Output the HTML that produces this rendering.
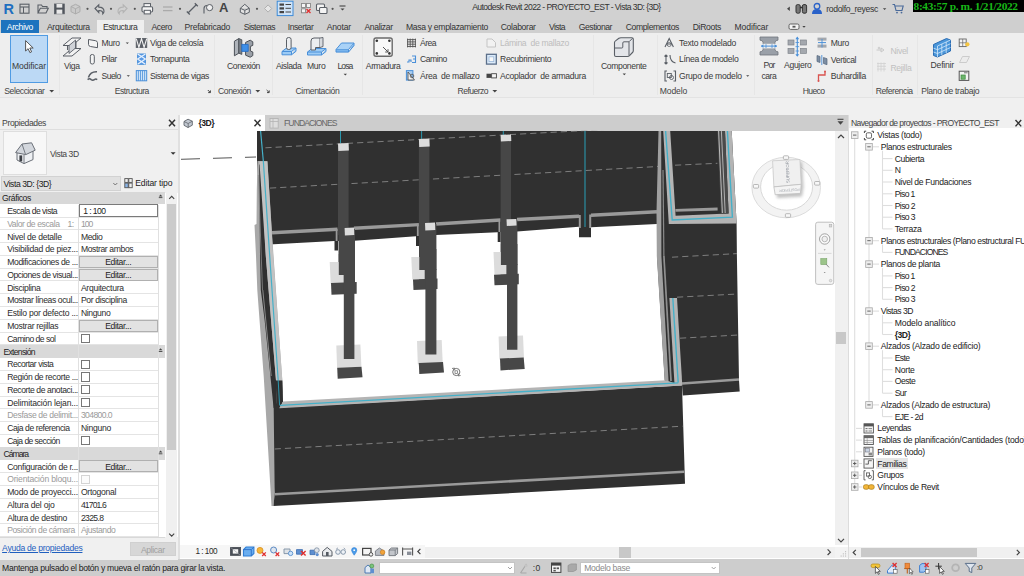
<!DOCTYPE html>
<html lang="es"><head><meta charset="utf-8"><title>Autodesk Revit 2022 - PROYECTO_EST - Vista 3D: {3D}</title>
<style>
html,body{margin:0;padding:0;}
body{width:1024px;height:576px;overflow:hidden;position:relative;background:#f3f3f3;font-family:"Liberation Sans", sans-serif;}
div{position:absolute;box-sizing:border-box;}
.t{white-space:pre;letter-spacing:-0.1px;}
svg{position:absolute;left:0;top:0;}
</style></head><body>
<div style="left:0px;top:0px;width:1024px;height:19.5px;background:#d1d1d1;"></div>
<div style="left:0px;top:19.5px;width:1024px;height:13.5px;background:#cfcfcf;"></div>
<div style="left:0px;top:33px;width:1024px;height:64px;background:#eeeeee;"></div>
<div style="left:0px;top:96.8px;width:1024px;height:1.1px;background:#e3e3e3;"></div>
<div style="left:0px;top:97.5px;width:1024px;height:17.2px;background:#f0f0f0;"></div>
<div style="left:0px;top:114.6px;width:1024px;height:0.8px;background:#e4e4e4;"></div>
<div style="left:0px;top:115.3px;width:178px;height:444.7px;background:#ffffff;"></div>
<div style="left:0px;top:115.3px;width:178px;height:14.4px;background:#f0f0f0;"></div>
<div style="left:180px;top:115.3px;width:668px;height:444.7px;background:#ffffff;"></div>
<div style="left:180px;top:115.3px;width:668px;height:15.4px;background:#cdcdcd;"></div>
<div style="left:180px;top:115.3px;width:85px;height:15.4px;background:#ffffff;"></div>
<div style="left:849px;top:115.3px;width:175px;height:444.7px;background:#ffffff;"></div>
<div style="left:849px;top:115.3px;width:175px;height:12.7px;background:#f0f0f0;"></div>
<div style="left:178px;top:115.3px;width:2px;height:444.7px;background:#e0e0e0;"></div>
<div style="left:847.5px;top:115.3px;width:1.5px;height:444.7px;background:#dcdcdc;"></div>
<div style="left:0px;top:558.8px;width:1024px;height:17.2px;background:#cdcdcd;"></div>
<svg width="1024" height="576" viewBox="0 0 1024 576"><defs><clipPath id="vp"><rect x="180" y="130.7" width="655" height="414"/></clipPath></defs><g clip-path="url(#vp)">
<polygon points="257.0,131.0 660.0,131.0 657.0,224.0 591.0,227.2 591.0,237.3 579.0,237.3 579.0,226.8 517.0,231.5 500.6,232.0 500.6,242.0 497.7,242.0 497.7,232.3 436.0,235.0 419.0,236.0 419.0,246.0 416.0,246.0 416.0,236.2 354.4,240.8 338.0,241.0 338.0,250.5 334.5,250.5 334.5,241.0 273.6,244.3 262.0,244.5 257.0,160.0" fill="#303030" />
<line x1="272.0" y1="232.8" x2="337.5" y2="229.3" stroke="#9a9a9a" stroke-width="3.4" />
<line x1="354.0" y1="228.3" x2="419.0" y2="224.6" stroke="#9a9a9a" stroke-width="3.4" />
<line x1="436.0" y1="224.0" x2="500.6" y2="220.0" stroke="#9a9a9a" stroke-width="3.4" />
<line x1="517.0" y1="219.5" x2="579.0" y2="216.2" stroke="#9a9a9a" stroke-width="3.4" />
<line x1="579.8" y1="215.0" x2="579.8" y2="228.0" stroke="#9a9a9a" stroke-width="2" />
<line x1="590.2" y1="214.6" x2="590.2" y2="228.0" stroke="#9a9a9a" stroke-width="2" />
<line x1="591.0" y1="215.3" x2="657.0" y2="211.8" stroke="#9a9a9a" stroke-width="3.4" />
<line x1="336.6" y1="229.0" x2="336.6" y2="241.0" stroke="#9a9a9a" stroke-width="1.8" />
<line x1="417.8" y1="224.6" x2="417.8" y2="236.0" stroke="#9a9a9a" stroke-width="1.8" />
<line x1="499.4" y1="220.2" x2="499.4" y2="232.0" stroke="#9a9a9a" stroke-width="1.8" />
<line x1="265.4" y1="147.8" x2="660.0" y2="126.5" stroke="#7e7e7e" stroke-width="1" stroke-dasharray="6.2 4"/>
<line x1="270.0" y1="188.1" x2="658.0" y2="166.5" stroke="#7e7e7e" stroke-width="1" stroke-dasharray="6.2 4"/>
<line x1="340.5" y1="131.0" x2="340.5" y2="144.0" stroke="#2b97ad" stroke-width="1" />
<line x1="421.6" y1="131.0" x2="421.6" y2="139.0" stroke="#2b97ad" stroke-width="1" />
<line x1="503.3" y1="131.0" x2="503.3" y2="135.0" stroke="#2b97ad" stroke-width="1" />
<line x1="585.0" y1="131.0" x2="585.0" y2="227.0" stroke="#2b97ad" stroke-width="1.1" />
<polygon points="257.5,161.0 267.4,161.0 273.5,256.0 283.0,391.0 283.0,401.6 279.4,407.6 274.7,493.0 273.5,506.0 271.5,506.0 263.7,376.0 257.3,290.0 256.0,256.0 254.5,225.0 256.5,224.0 256.8,190.0" fill="#a8a8a8" />
<polygon points="259.2,165.0 261.0,163.0 265.8,256.0 276.0,380.5 277.0,407.4 273.6,408.0 270.4,376.0 264.6,320.0 260.8,290.0 260.0,256.0" fill="#303030" />
<polygon points="259.4,161.5 267.4,161.5 273.2,256.0 282.4,380.5 276.0,380.5 265.8,256.0" fill="#c2c2c2" />
<line x1="258.3" y1="175.0" x2="262.5" y2="290.0" stroke="#8c8c8c" stroke-width="0.8" />
<line x1="262.8" y1="290.0" x2="271.2" y2="376.0" stroke="#8a8a8a" stroke-width="1" />
<polygon points="275.6,380.5 282.4,380.5 283.0,401.6 280.0,407.4 277.0,407.4" fill="#303030" />
<polyline points="260.6,131 263.4,162 269.7,256 278.2,380.5" fill="none" stroke="#45b0c8" stroke-width="1.2"/>
<polyline points="278.2,380.5 279.6,405.5" fill="none" stroke="#2b97ad" stroke-width="1"/>
<polygon points="660.0,131.0 731.7,131.0 736.6,223.0 736.9,256.0 739.0,380.0 739.7,391.6 682.8,395.4 682.0,385.0 665.0,384.0 657.0,256.0 657.0,224.0" fill="#303030" />
<polygon points="658.5,131.0 661.2,131.0 661.4,256.0 668.6,381.5 664.6,380.3 656.8,256.0 656.5,212.0" fill="#a0a0a0" />
<line x1="663.0" y1="170.0" x2="663.9" y2="256.0" stroke="#8a8a8a" stroke-width="1.2" />
<line x1="663.9" y1="256.0" x2="671.0" y2="381.0" stroke="#909090" stroke-width="1.7" />
<polygon points="663.2,131.0 670.2,131.0 675.6,215.8 728.6,213.4 725.0,131.0 731.7,131.0 736.6,223.4 668.8,224.0" fill="#b4b4b4" />
<polygon points="717.4,131.0 725.0,131.0 728.6,213.4 721.0,213.8" fill="#4a4a4a" />
<line x1="718.6" y1="131.0" x2="722.4" y2="213.0" stroke="#c8c8c8" stroke-width="0.9" />
<line x1="721.4" y1="131.0" x2="725.2" y2="213.0" stroke="#bdbdbd" stroke-width="0.9" />
<polyline points="665.6,131 672.2,220 732.4,217.2 727.4,131" fill="none" stroke="#45b0c8" stroke-width="1.4"/>
<line x1="675.4" y1="210.4" x2="717.6" y2="209.0" stroke="#9a9a9a" stroke-width="2.8" />
<line x1="675.0" y1="165.2" x2="717.4" y2="163.3" stroke="#7e7e7e" stroke-width="1" stroke-dasharray="6.2 4"/>
<line x1="672.0" y1="257.2" x2="737.0" y2="253.6" stroke="#7e7e7e" stroke-width="1" stroke-dasharray="6.2 4"/>
<line x1="677.0" y1="297.2" x2="737.5" y2="294.0" stroke="#7e7e7e" stroke-width="1" stroke-dasharray="6.2 4"/>
<line x1="680.0" y1="338.2" x2="738.5" y2="335.0" stroke="#7e7e7e" stroke-width="1" stroke-dasharray="6.2 4"/>
<polygon points="669.4,298.0 677.0,298.0 682.3,385.5 674.6,386.0" fill="#b4b4b4" />
<polyline points="672.8,298 678.2,382.5" fill="none" stroke="#45b0c8" stroke-width="1.4"/>
<line x1="682.0" y1="383.5" x2="739.0" y2="379.5" stroke="#9a9a9a" stroke-width="2.6" />
<polygon points="273.6,400.0 279.4,407.6 682.0,385.4 685.0,483.7 273.5,506.0 274.7,493.0" fill="#303030" />
<polygon points="283.0,401.4 665.7,380.3 682.3,385.6 279.4,408.2" fill="#b4b4b4" />
<polyline points="280,405.3 678.2,382.9" fill="none" stroke="#45b0c8" stroke-width="1.3"/>
<line x1="274.7" y1="494.2" x2="684.3" y2="471.7" stroke="#9a9a9a" stroke-width="2.6" />
<line x1="274.7" y1="449.0" x2="682.5" y2="426.2" stroke="#7e7e7e" stroke-width="1" stroke-dasharray="6.2 4"/>
<polygon points="338.0,143.6 348.6,143.6 348.6,235.0 338.0,235.0" fill="#474747" />
<polygon points="338.0,143.6 348.6,143.1 348.9,150.6 338.3,151.1" fill="#dcdcdc" />
<polygon points="338.5,229.0 355.0,229.0 355.0,285.0 338.5,285.0" fill="#474747" />
<polygon points="344.6,228.0 354.0,227.6 354.3,235.0 344.9,235.4" fill="#dcdcdc" />
<polygon points="329.7,262.0 343.8,262.0 343.8,284.0 330.7,284.0" fill="#dcdcdc" />
<polygon points="331.0,283.0 356.7,282.0 356.7,293.7 331.5,294.7" fill="#474747" />
<polygon points="338.8,254.0 355.0,254.0 355.0,275.0 338.8,275.0" fill="#474747" />
<polygon points="336.3,345.5 360.4,344.5 361.4,366.8 337.1,367.8" fill="#dcdcdc" />
<polygon points="343.8,274.0 354.4,274.0 354.4,359.0 343.8,359.0" fill="#474747" />
<polygon points="337.2,367.8 361.5,366.8 362.5,377.3 337.7,378.7" fill="#474747" />
<polygon points="418.9,138.9 429.4,138.9 429.4,230.0 418.9,230.0" fill="#474747" />
<polygon points="418.9,138.9 429.4,138.4 429.7,146.6 419.2,147.1" fill="#dcdcdc" />
<polygon points="419.0,224.0 436.4,224.0 436.4,281.4 419.0,281.4" fill="#474747" />
<polygon points="425.0,223.0 435.0,222.6 435.3,230.0 425.3,230.4" fill="#dcdcdc" />
<polygon points="411.3,257.0 424.7,257.0 424.7,279.4 412.3,279.4" fill="#dcdcdc" />
<polygon points="413.0,279.4 437.5,278.4 437.5,289.0 413.5,290.0" fill="#474747" />
<polygon points="419.3,249.0 436.4,249.0 436.4,270.0 419.3,270.0" fill="#474747" />
<polygon points="417.0,340.9 441.7,339.9 442.7,363.3 417.8,364.3" fill="#dcdcdc" />
<polygon points="425.4,269.0 436.4,269.0 436.4,354.4 425.4,354.4" fill="#474747" />
<polygon points="418.8,363.1 443.0,362.1 444.0,372.5 419.3,373.9" fill="#474747" />
<polygon points="500.6,135.0 511.0,135.0 511.0,225.6 500.6,225.6" fill="#474747" />
<polygon points="500.6,135.0 511.0,134.5 511.3,141.0 500.9,141.5" fill="#dcdcdc" />
<polygon points="500.6,220.3 517.4,220.3 517.4,276.7 500.6,276.7" fill="#474747" />
<polygon points="506.5,219.3 516.3,218.9 516.6,225.6 506.8,226.0" fill="#dcdcdc" />
<polygon points="493.5,252.0 506.4,252.0 506.4,274.7 494.5,274.7" fill="#dcdcdc" />
<polygon points="494.0,274.7 518.8,273.7 518.8,284.3 494.5,285.3" fill="#474747" />
<polygon points="500.9,244.0 517.4,244.0 517.4,265.0 500.9,265.0" fill="#474747" />
<polygon points="498.6,336.5 523.0,335.5 524.0,358.5 499.4,359.5" fill="#dcdcdc" />
<polygon points="507.0,264.0 517.4,264.0 517.4,349.7 507.0,349.7" fill="#474747" />
<polygon points="500.0,358.5 523.7,357.5 524.7,369.0 500.5,370.4" fill="#474747" />
<line x1="181.0" y1="159.3" x2="256.0" y2="157.0" stroke="#555" stroke-width="1" stroke-dasharray="19 13"/>
</g></svg>
<div style="left:835px;top:130.7px;width:12.5px;height:414px;background:#f0f0f0;"></div>
<div style="left:836px;top:332px;width:10px;height:12px;background:#c8c8c8;"></div>
<div style="left:425px;top:546.8px;width:410px;height:11.4px;background:#f0f0f0;"></div>
<div style="left:619.4px;top:547.2px;width:11.3px;height:10.4px;background:#c8c8c8;"></div>
<div style="left:180px;top:545.4px;width:245px;height:12.8px;background:#f6f6f6;"></div>
<div style="left:835px;top:546.8px;width:12.5px;height:11.4px;background:#f3f3f3;"></div>
<div class="t" style="left:472.2px;top:0.6px;font-size:8.6px;line-height:12px;color:#333;letter-spacing:-0.576px;">Autodesk Revit 2022 - PROYECTO_EST - Vista 3D: {3D}</div>
<div class="t" style="left:826.3px;top:2.8px;font-size:8.6px;line-height:12px;color:#333;letter-spacing:-0.344px;">rodolfo_reyesc</div>
<div style="left:912.7px;top:0px;width:111.3px;height:12.3px;background:#000;"></div>
<div class="t" style="left:913.6px;top:-1.2px;font-family:'Liberation Serif',serif;font-weight:bold;font-size:11.4px;line-height:14px;color:#18b818;letter-spacing:-0.357px">8:43:57 p. m. 1/21/2022</div>
<div class="t" style="left:3.6px;top:0.5px;font-size:14.5px;line-height:16px;font-weight:bold;color:#1f6fc0;letter-spacing:0">R</div>
<div class="t" style="left:219px;top:0.4px;font-size:13px;line-height:16px;font-weight:bold;color:#444;letter-spacing:0">A</div>
<div style="left:0.8px;top:20px;width:38px;height:13px;background:#1e73be;"></div>
<div style="left:97px;top:20px;width:47px;height:13.2px;background:#eeeeee;"></div>
<div class="t" style="left:6.8px;top:20.8px;font-size:8.6px;line-height:12px;color:#fff;letter-spacing:-0.383px;">Archivo</div>
<div class="t" style="left:46.9px;top:20.8px;font-size:8.6px;line-height:12px;color:#333;letter-spacing:-0.289px;">Arquitectura</div>
<div class="t" style="left:103.0px;top:20.8px;font-size:8.6px;line-height:12px;color:#333;letter-spacing:-0.489px;">Estructura</div>
<div class="t" style="left:151.4px;top:20.8px;font-size:8.6px;line-height:12px;color:#333;letter-spacing:-0.393px;">Acero</div>
<div class="t" style="left:184.6px;top:20.8px;font-size:8.6px;line-height:12px;color:#333;letter-spacing:-0.280px;">Prefabricado</div>
<div class="t" style="left:243.7px;top:20.8px;font-size:8.6px;line-height:12px;color:#333;letter-spacing:-0.508px;">Sistemas</div>
<div class="t" style="left:287.7px;top:20.8px;font-size:8.6px;line-height:12px;color:#333;letter-spacing:-0.432px;">Insertar</div>
<div class="t" style="left:326.7px;top:20.8px;font-size:8.6px;line-height:12px;color:#333;letter-spacing:-0.173px;">Anotar</div>
<div class="t" style="left:364.4px;top:20.8px;font-size:8.6px;line-height:12px;color:#333;letter-spacing:-0.346px;">Analizar</div>
<div class="t" style="left:406.0px;top:20.8px;font-size:8.6px;line-height:12px;color:#333;letter-spacing:-0.321px;">Masa y emplazamiento</div>
<div class="t" style="left:500.7px;top:20.8px;font-size:8.6px;line-height:12px;color:#333;letter-spacing:-0.307px;">Colaborar</div>
<div class="t" style="left:549.0px;top:20.8px;font-size:8.6px;line-height:12px;color:#333;letter-spacing:-0.593px;">Vista</div>
<div class="t" style="left:578.8px;top:20.8px;font-size:8.6px;line-height:12px;color:#333;letter-spacing:-0.454px;">Gestionar</div>
<div class="t" style="left:625.7px;top:20.8px;font-size:8.6px;line-height:12px;color:#333;letter-spacing:-0.378px;">Complementos</div>
<div class="t" style="left:692.7px;top:20.8px;font-size:8.6px;line-height:12px;color:#333;letter-spacing:-0.327px;">DiRoots</div>
<div class="t" style="left:734.6px;top:20.8px;font-size:8.6px;line-height:12px;color:#333;letter-spacing:-0.143px;">Modificar</div>
<div style="left:58.6px;top:35px;width:1px;height:60px;background:#e6e6e6;"></div>
<div style="left:213.8px;top:35px;width:1px;height:60px;background:#e6e6e6;"></div>
<div style="left:272.4px;top:35px;width:1px;height:60px;background:#e6e6e6;"></div>
<div style="left:361.5px;top:35px;width:1px;height:60px;background:#e6e6e6;"></div>
<div style="left:592.5px;top:35px;width:1px;height:60px;background:#e6e6e6;"></div>
<div style="left:657.3px;top:35px;width:1px;height:60px;background:#e6e6e6;"></div>
<div style="left:753.6px;top:35px;width:1px;height:60px;background:#e6e6e6;"></div>
<div style="left:871.8px;top:35px;width:1px;height:60px;background:#e6e6e6;"></div>
<div style="left:917.2px;top:35px;width:1px;height:60px;background:#e6e6e6;"></div>
<div style="left:9.8px;top:35px;width:38.2px;height:47.6px;background:#bcd9f5;border:1px solid #4f9be3;"></div>
<div class="t" style="left:12.0px;top:59.5px;font-size:8.6px;line-height:12px;color:#3a3a3a;letter-spacing:-0.099px;">Modificar</div>
<div class="t" style="left:4.3px;top:85.4px;font-size:8.6px;line-height:12px;color:#444;letter-spacing:-0.431px;">Seleccionar</div>
<div class="t" style="left:64.0px;top:59.5px;font-size:8.6px;line-height:12px;color:#3a3a3a;letter-spacing:-0.340px;">Viga</div>
<div class="t" style="left:101.5px;top:36.8px;font-size:8.6px;line-height:12px;color:#3a3a3a;letter-spacing:-0.349px;">Muro</div>
<div class="t" style="left:101.5px;top:53.4px;font-size:8.6px;line-height:12px;color:#3a3a3a;letter-spacing:-0.381px;">Pilar</div>
<div class="t" style="left:101.5px;top:70.0px;font-size:8.6px;line-height:12px;color:#3a3a3a;letter-spacing:-0.559px;">Suelo</div>
<div class="t" style="left:150.0px;top:36.8px;font-size:8.6px;line-height:12px;color:#3a3a3a;letter-spacing:-0.357px;">Viga de celosía</div>
<div class="t" style="left:150.0px;top:53.4px;font-size:8.6px;line-height:12px;color:#3a3a3a;letter-spacing:-0.353px;">Tornapunta</div>
<div class="t" style="left:150.0px;top:70.0px;font-size:8.6px;line-height:12px;color:#3a3a3a;letter-spacing:-0.406px;">Sistema de vigas</div>
<div class="t" style="left:114.8px;top:85.4px;font-size:8.6px;line-height:12px;color:#444;letter-spacing:-0.519px;">Estructura</div>
<div class="t" style="left:227.0px;top:59.5px;font-size:8.6px;line-height:12px;color:#3a3a3a;letter-spacing:-0.417px;">Conexión</div>
<div class="t" style="left:218.0px;top:85.4px;font-size:8.6px;line-height:12px;color:#444;letter-spacing:-0.417px;">Conexión</div>
<div class="t" style="left:276.0px;top:59.5px;font-size:8.6px;line-height:12px;color:#3a3a3a;letter-spacing:-0.415px;">Aislada</div>
<div class="t" style="left:307.0px;top:59.5px;font-size:8.6px;line-height:12px;color:#3a3a3a;letter-spacing:-0.299px;">Muro</div>
<div class="t" style="left:337.5px;top:60.0px;font-size:8.6px;line-height:12px;color:#3a3a3a;letter-spacing:-0.912px;">Losa</div>
<div class="t" style="left:295.5px;top:85.4px;font-size:8.6px;line-height:12px;color:#444;letter-spacing:-0.355px;">Cimentación</div>
<div class="t" style="left:365.8px;top:59.5px;font-size:8.6px;line-height:12px;color:#3a3a3a;letter-spacing:-0.383px;">Armadura</div>
<div class="t" style="left:420.0px;top:36.8px;font-size:8.6px;line-height:12px;color:#3a3a3a;letter-spacing:-0.542px;">Área</div>
<div class="t" style="left:420.0px;top:53.4px;font-size:8.6px;line-height:12px;color:#3a3a3a;letter-spacing:-0.473px;">Camino</div>
<div class="t" style="left:420.0px;top:70.0px;font-size:8.6px;line-height:12px;color:#3a3a3a;letter-spacing:-0.308px;">Área  de mallazo</div>
<div class="t" style="left:500.0px;top:36.8px;font-size:8.6px;line-height:12px;color:#bdbdbd;letter-spacing:-0.310px;">Lámina  de mallazo</div>
<div class="t" style="left:500.0px;top:53.4px;font-size:8.6px;line-height:12px;color:#3a3a3a;letter-spacing:-0.319px;">Recubrimiento</div>
<div class="t" style="left:500.0px;top:70.0px;font-size:8.6px;line-height:12px;color:#3a3a3a;letter-spacing:-0.285px;">Acoplador  de armadura</div>
<div class="t" style="left:457.5px;top:85.4px;font-size:8.6px;line-height:12px;color:#444;letter-spacing:-0.550px;">Refuerzo</div>
<div class="t" style="left:600.9px;top:59.5px;font-size:8.6px;line-height:12px;color:#3a3a3a;letter-spacing:-0.355px;">Componente</div>
<div class="t" style="left:679.0px;top:36.8px;font-size:8.6px;line-height:12px;color:#3a3a3a;letter-spacing:-0.266px;">Texto modelado</div>
<div class="t" style="left:679.0px;top:53.4px;font-size:8.6px;line-height:12px;color:#3a3a3a;letter-spacing:-0.312px;">Línea de modelo</div>
<div class="t" style="left:679.0px;top:70.0px;font-size:8.6px;line-height:12px;color:#3a3a3a;letter-spacing:-0.237px;">Grupo de modelo</div>
<div class="t" style="left:659.8px;top:85.4px;font-size:8.6px;line-height:12px;color:#444;letter-spacing:-0.135px;">Modelo</div>
<div class="t" style="left:763.4px;top:58.9px;font-size:8.6px;line-height:12px;color:#3a3a3a;letter-spacing:-0.728px;">Por</div>
<div class="t" style="left:761.5px;top:70.2px;font-size:8.6px;line-height:12px;color:#3a3a3a;letter-spacing:-0.508px;">cara</div>
<div class="t" style="left:784.0px;top:58.9px;font-size:8.6px;line-height:12px;color:#3a3a3a;letter-spacing:-0.306px;">Agujero</div>
<div class="t" style="left:830.8px;top:36.7px;font-size:8.6px;line-height:12px;color:#3a3a3a;letter-spacing:-0.349px;">Muro</div>
<div class="t" style="left:830.8px;top:53.5px;font-size:8.6px;line-height:12px;color:#3a3a3a;letter-spacing:-0.350px;">Vertical</div>
<div class="t" style="left:830.8px;top:70.2px;font-size:8.6px;line-height:12px;color:#3a3a3a;letter-spacing:-0.315px;">Buhardilla</div>
<div class="t" style="left:802.7px;top:85.4px;font-size:8.6px;line-height:12px;color:#444;letter-spacing:-0.632px;">Hueco</div>
<div class="t" style="left:890.5px;top:44.8px;font-size:8.6px;line-height:12px;color:#c0c0c0;letter-spacing:-0.343px;">Nivel</div>
<div class="t" style="left:890.5px;top:61.9px;font-size:8.6px;line-height:12px;color:#c0c0c0;letter-spacing:-0.360px;">Rejilla</div>
<div class="t" style="left:875.8px;top:85.4px;font-size:8.6px;line-height:12px;color:#444;letter-spacing:-0.469px;">Referencia</div>
<div class="t" style="left:930.6px;top:58.9px;font-size:8.6px;line-height:12px;color:#3a3a3a;letter-spacing:-0.222px;">Definir</div>
<div class="t" style="left:921.3px;top:85.4px;font-size:8.6px;line-height:12px;color:#444;letter-spacing:-0.290px;">Plano de trabajo</div>
<div class="t" style="left:2.1px;top:117.2px;font-size:8.6px;line-height:12px;color:#444;letter-spacing:-0.399px;">Propiedades</div>
<div style="left:0px;top:129.4px;width:178px;height:63.4px;background:#f0f0f0;"></div>
<div style="left:0px;top:129.3px;width:178px;height:1px;background:#dedede;"></div>
<div style="left:3.2px;top:131.2px;width:43.6px;height:43.6px;background:#f7f7f7;border:1px solid #dedede;"></div>
<div class="t" style="left:50.0px;top:147.7px;font-size:8.6px;line-height:12px;color:#444;letter-spacing:-0.456px;">Vista 3D</div>
<div style="left:1.4px;top:176.2px;width:119.8px;height:14.9px;background:#e1e1e1;border:1px solid #d2d2d2;"></div>
<div class="t" style="left:3.5px;top:177.5px;font-size:8.6px;line-height:12px;color:#222;letter-spacing:-0.433px;">Vista 3D: {3D}</div>
<div class="t" style="left:135.3px;top:177.2px;font-size:8.6px;line-height:12px;color:#222;letter-spacing:-0.157px;">Editar tipo</div>
<div style="left:0px;top:191.8px;width:165.3px;height:345.6px;background:#fff;"></div>
<div style="left:0px;top:191.8px;width:165.3px;height:11.9px;background:#d8d8d8;"></div>
<div class="t" style="left:2.1px;top:191.9px;font-size:8.6px;line-height:12px;color:#222;letter-spacing:-0.415px;">Gráficos</div>
<div style="left:0px;top:216.57999999999998px;width:158.3px;height:0.8px;background:#e4e4e4;"></div>
<div class="t" style="left:7.2px;top:204.9px;font-size:8.6px;line-height:12px;color:#2c2c2c;letter-spacing:-0.529px;">Escala de vista</div>
<div style="left:79px;top:204.4px;width:78.8px;height:12.78px;background:#fff;border:1.2px solid #7a7a7a;"></div>
<div class="t" style="left:83.3px;top:204.9px;font-size:8.6px;line-height:12px;color:#222;letter-spacing:-0.600px;">1 : 100</div>
<div style="left:0px;top:229.35999999999999px;width:158.3px;height:0.8px;background:#e4e4e4;"></div>
<div class="t" style="left:7.2px;top:217.7px;font-size:8.6px;line-height:12px;color:#9a9a9a;letter-spacing:-0.418px;">Valor de escala    1:</div>
<div class="t" style="left:80.9px;top:217.7px;font-size:8.6px;line-height:12px;color:#9a9a9a;letter-spacing:-0.916px;">100</div>
<div style="left:0px;top:242.14px;width:158.3px;height:0.8px;background:#e4e4e4;"></div>
<div class="t" style="left:7.2px;top:230.5px;font-size:8.6px;line-height:12px;color:#2c2c2c;letter-spacing:-0.269px;">Nivel de detalle</div>
<div class="t" style="left:80.9px;top:230.5px;font-size:8.6px;line-height:12px;color:#2c2c2c;letter-spacing:-0.365px;">Medio</div>
<div style="left:0px;top:254.92px;width:158.3px;height:0.8px;background:#e4e4e4;"></div>
<div class="t" style="left:7.2px;top:243.3px;font-size:8.6px;line-height:12px;color:#2c2c2c;letter-spacing:-0.234px;">Visibilidad de piez...</div>
<div class="t" style="left:80.9px;top:243.3px;font-size:8.6px;line-height:12px;color:#2c2c2c;letter-spacing:-0.381px;">Mostrar ambos</div>
<div style="left:0px;top:267.7px;width:158.3px;height:0.8px;background:#e4e4e4;"></div>
<div class="t" style="left:7.2px;top:256.1px;font-size:8.6px;line-height:12px;color:#2c2c2c;letter-spacing:-0.366px;">Modificaciones de ...</div>
<div style="left:79px;top:255.72px;width:78.6px;height:12.18px;background:#e2e2e2;border:1px solid #b0b0b0;"></div>
<div class="t" style="left:105.2px;top:256.1px;font-size:8.6px;line-height:12px;color:#222;letter-spacing:-0.351px;">Editar...</div>
<div style="left:0px;top:280.47999999999996px;width:158.3px;height:0.8px;background:#e4e4e4;"></div>
<div class="t" style="left:7.2px;top:268.8px;font-size:8.6px;line-height:12px;color:#2c2c2c;letter-spacing:-0.435px;">Opciones de visual...</div>
<div style="left:79px;top:268.5px;width:78.6px;height:12.18px;background:#e2e2e2;border:1px solid #b0b0b0;"></div>
<div class="t" style="left:105.2px;top:268.8px;font-size:8.6px;line-height:12px;color:#222;letter-spacing:-0.351px;">Editar...</div>
<div style="left:0px;top:293.25999999999993px;width:158.3px;height:0.8px;background:#e4e4e4;"></div>
<div class="t" style="left:7.2px;top:281.6px;font-size:8.6px;line-height:12px;color:#2c2c2c;letter-spacing:-0.360px;">Disciplina</div>
<div class="t" style="left:80.9px;top:281.6px;font-size:8.6px;line-height:12px;color:#2c2c2c;letter-spacing:-0.289px;">Arquitectura</div>
<div style="left:0px;top:306.0399999999999px;width:158.3px;height:0.8px;background:#e4e4e4;"></div>
<div class="t" style="left:7.2px;top:294.4px;font-size:8.6px;line-height:12px;color:#2c2c2c;letter-spacing:-0.415px;">Mostrar líneas ocul...</div>
<div class="t" style="left:80.9px;top:294.4px;font-size:8.6px;line-height:12px;color:#2c2c2c;letter-spacing:-0.361px;">Por disciplina</div>
<div style="left:0px;top:318.8199999999999px;width:158.3px;height:0.8px;background:#e4e4e4;"></div>
<div class="t" style="left:7.2px;top:307.2px;font-size:8.6px;line-height:12px;color:#2c2c2c;letter-spacing:-0.241px;">Estilo por defecto ...</div>
<div class="t" style="left:80.9px;top:307.2px;font-size:8.6px;line-height:12px;color:#2c2c2c;letter-spacing:-0.362px;">Ninguno</div>
<div style="left:0px;top:331.59999999999985px;width:158.3px;height:0.8px;background:#e4e4e4;"></div>
<div class="t" style="left:7.2px;top:320.0px;font-size:8.6px;line-height:12px;color:#2c2c2c;letter-spacing:-0.301px;">Mostrar rejillas</div>
<div style="left:79px;top:319.6199999999999px;width:78.6px;height:12.18px;background:#e2e2e2;border:1px solid #b0b0b0;"></div>
<div class="t" style="left:105.2px;top:320.0px;font-size:8.6px;line-height:12px;color:#222;letter-spacing:-0.351px;">Editar...</div>
<div style="left:0px;top:344.3799999999998px;width:158.3px;height:0.8px;background:#e4e4e4;"></div>
<div class="t" style="left:7.2px;top:332.7px;font-size:8.6px;line-height:12px;color:#2c2c2c;letter-spacing:-0.521px;">Camino de sol</div>
<div style="left:80.6px;top:333.9999999999999px;width:9.2px;height:9.2px;background:#fff;border:1px solid #777;"></div>
<div style="left:0px;top:345.17999999999984px;width:165.3px;height:12.78px;background:#d9d9d9;"></div>
<div class="t" style="left:3.4px;top:345.9px;font-size:8.6px;line-height:12px;color:#222;letter-spacing:-0.685px;">Extensión</div>
<div style="left:0px;top:369.93999999999977px;width:158.3px;height:0.8px;background:#e4e4e4;"></div>
<div class="t" style="left:7.2px;top:358.3px;font-size:8.6px;line-height:12px;color:#2c2c2c;letter-spacing:-0.489px;">Recortar vista</div>
<div style="left:80.6px;top:359.55999999999983px;width:9.2px;height:9.2px;background:#fff;border:1px solid #777;"></div>
<div style="left:0px;top:382.71999999999974px;width:158.3px;height:0.8px;background:#e4e4e4;"></div>
<div class="t" style="left:7.2px;top:371.1px;font-size:8.6px;line-height:12px;color:#2c2c2c;letter-spacing:-0.344px;">Región de recorte ...</div>
<div style="left:80.6px;top:372.3399999999998px;width:9.2px;height:9.2px;background:#fff;border:1px solid #777;"></div>
<div style="left:0px;top:395.4999999999997px;width:158.3px;height:0.8px;background:#e4e4e4;"></div>
<div class="t" style="left:7.2px;top:383.9px;font-size:8.6px;line-height:12px;color:#2c2c2c;letter-spacing:-0.412px;">Recorte de anotaci...</div>
<div style="left:80.6px;top:385.1199999999998px;width:9.2px;height:9.2px;background:#fff;border:1px solid #777;"></div>
<div style="left:0px;top:408.2799999999997px;width:158.3px;height:0.8px;background:#e4e4e4;"></div>
<div class="t" style="left:7.2px;top:396.6px;font-size:8.6px;line-height:12px;color:#2c2c2c;letter-spacing:-0.184px;">Delimitación lejan...</div>
<div style="left:80.6px;top:397.89999999999975px;width:9.2px;height:9.2px;background:#fff;border:1px solid #777;"></div>
<div style="left:0px;top:421.05999999999966px;width:158.3px;height:0.8px;background:#e4e4e4;"></div>
<div class="t" style="left:7.2px;top:409.4px;font-size:8.6px;line-height:12px;color:#9a9a9a;letter-spacing:-0.343px;">Desfase de delimit...</div>
<div class="t" style="left:80.9px;top:409.4px;font-size:8.6px;line-height:12px;color:#9a9a9a;letter-spacing:-0.596px;">304800.0</div>
<div style="left:0px;top:433.83999999999963px;width:158.3px;height:0.8px;background:#e4e4e4;"></div>
<div class="t" style="left:7.2px;top:422.2px;font-size:8.6px;line-height:12px;color:#2c2c2c;letter-spacing:-0.432px;">Caja de referencia</div>
<div class="t" style="left:80.9px;top:422.2px;font-size:8.6px;line-height:12px;color:#2c2c2c;letter-spacing:-0.277px;">Ninguno</div>
<div style="left:0px;top:446.6199999999996px;width:158.3px;height:0.8px;background:#e4e4e4;"></div>
<div class="t" style="left:7.2px;top:435.0px;font-size:8.6px;line-height:12px;color:#2c2c2c;letter-spacing:-0.573px;">Caja de sección</div>
<div style="left:80.6px;top:436.23999999999967px;width:9.2px;height:9.2px;background:#fff;border:1px solid #777;"></div>
<div style="left:0px;top:447.4199999999996px;width:165.3px;height:12.78px;background:#d9d9d9;"></div>
<div class="t" style="left:3.4px;top:448.2px;font-size:8.6px;line-height:12px;color:#222;letter-spacing:-0.965px;">Cámara</div>
<div style="left:0px;top:472.17999999999955px;width:158.3px;height:0.8px;background:#e4e4e4;"></div>
<div class="t" style="left:7.2px;top:460.5px;font-size:8.6px;line-height:12px;color:#2c2c2c;letter-spacing:-0.299px;">Configuración de r...</div>
<div style="left:79px;top:460.1999999999996px;width:78.6px;height:12.18px;background:#e2e2e2;border:1px solid #b0b0b0;"></div>
<div class="t" style="left:105.2px;top:460.5px;font-size:8.6px;line-height:12px;color:#222;letter-spacing:-0.351px;">Editar...</div>
<div style="left:0px;top:484.9599999999995px;width:158.3px;height:0.8px;background:#e4e4e4;"></div>
<div class="t" style="left:7.2px;top:473.3px;font-size:8.6px;line-height:12px;color:#9a9a9a;letter-spacing:-0.194px;">Orientación bloqu...</div>
<div style="left:80.6px;top:474.5799999999996px;width:9.2px;height:9.2px;background:#fbfbfb;border:1px solid #d4d4d4;"></div>
<div style="left:0px;top:497.7399999999995px;width:158.3px;height:0.8px;background:#e4e4e4;"></div>
<div class="t" style="left:7.2px;top:486.1px;font-size:8.6px;line-height:12px;color:#2c2c2c;letter-spacing:-0.229px;">Modo de proyecci...</div>
<div class="t" style="left:80.9px;top:486.1px;font-size:8.6px;line-height:12px;color:#2c2c2c;letter-spacing:-0.274px;">Ortogonal</div>
<div style="left:0px;top:510.51999999999947px;width:158.3px;height:0.8px;background:#e4e4e4;"></div>
<div class="t" style="left:7.2px;top:498.9px;font-size:8.6px;line-height:12px;color:#2c2c2c;letter-spacing:-0.193px;">Altura del ojo</div>
<div class="t" style="left:80.9px;top:498.9px;font-size:8.6px;line-height:12px;color:#2c2c2c;letter-spacing:-0.855px;">41701.6</div>
<div style="left:0px;top:523.2999999999995px;width:158.3px;height:0.8px;background:#e4e4e4;"></div>
<div class="t" style="left:7.2px;top:511.7px;font-size:8.6px;line-height:12px;color:#2c2c2c;letter-spacing:-0.279px;">Altura de destino</div>
<div class="t" style="left:80.9px;top:511.7px;font-size:8.6px;line-height:12px;color:#2c2c2c;letter-spacing:-0.634px;">2325.8</div>
<div style="left:0px;top:536.0799999999995px;width:158.3px;height:0.8px;background:#e4e4e4;"></div>
<div class="t" style="left:7.2px;top:524.4px;font-size:8.6px;line-height:12px;color:#9a9a9a;letter-spacing:-0.441px;">Posición de cámara</div>
<div class="t" style="left:80.9px;top:524.4px;font-size:8.6px;line-height:12px;color:#9a9a9a;letter-spacing:-0.417px;">Ajustando</div>
<div style="left:78.3px;top:205px;width:0.8px;height:332px;background:#e0e0e0;"></div>
<div style="left:158px;top:205px;width:0.8px;height:332px;background:#e0e0e0;"></div>
<div style="left:166.4px;top:191.8px;width:10.6px;height:347px;background:#f0f0f0;"></div>
<div style="left:166.9px;top:203.5px;width:9.4px;height:246.4px;background:#cbcbcb;"></div>
<div style="left:0px;top:537.4px;width:178px;height:22.6px;background:#f0f0f0;"></div>
<div style="left:0px;top:537.2px;width:165.3px;height:0.8px;background:#d8d8d8;"></div>
<div class="t" style="left:2.1px;top:542.1px;font-size:8.6px;line-height:12px;color:#1f5fbf;letter-spacing:-0.276px;text-decoration:underline;">Ayuda de propiedades</div>
<div style="left:130px;top:542px;width:46px;height:14.2px;background:#d7d7d7;border:1px solid #d0d0d0;"></div>
<div class="t" style="left:140.9px;top:543.5px;font-size:8.6px;line-height:12px;color:#a0a0a0;letter-spacing:-0.341px;">Aplicar</div>
<div class="t" style="left:198.5px;top:117.2px;font-size:8.6px;line-height:12px;color:#222;letter-spacing:-0.547px;font-weight:bold;">{3D}</div>
<div class="t" style="left:284.0px;top:117.2px;font-size:8.6px;line-height:12px;color:#666;letter-spacing:-0.909px;">FUNDACIONES</div>
<div class="t" style="left:195.6px;top:546.1px;font-size:8.2px;line-height:12px;color:#2a2a2a;letter-spacing:-0.525px;">1 : 100</div>
<div class="t" style="left:850.9px;top:117.3px;font-size:8.6px;line-height:12px;color:#444;letter-spacing:-0.618px;">Navegador de proyectos - PROYECTO_EST</div>
<div class="t" style="left:877.3px;top:129.1px;font-size:8.6px;line-height:12px;color:#222;letter-spacing:-0.263px;">Vistas (todo)</div>
<div class="t" style="left:880.8px;top:140.8px;font-size:8.6px;line-height:12px;color:#222;letter-spacing:-0.351px;">Planos estructurales</div>
<div class="t" style="left:894.7px;top:152.6px;font-size:8.6px;line-height:12px;color:#222;letter-spacing:-0.376px;">Cubierta</div>
<div class="t" style="left:894.7px;top:164.3px;font-size:8.6px;line-height:12px;color:#222;letter-spacing:-0.711px;">N</div>
<div class="t" style="left:894.7px;top:176.0px;font-size:8.6px;line-height:12px;color:#222;letter-spacing:-0.310px;">Nivel de Fundaciones</div>
<div class="t" style="left:894.7px;top:187.8px;font-size:8.6px;line-height:12px;color:#222;letter-spacing:-0.650px;">Piso 1</div>
<div class="t" style="left:894.7px;top:199.5px;font-size:8.6px;line-height:12px;color:#222;letter-spacing:-0.600px;">Piso 2</div>
<div class="t" style="left:894.7px;top:211.2px;font-size:8.6px;line-height:12px;color:#222;letter-spacing:-0.600px;">Piso 3</div>
<div class="t" style="left:894.7px;top:222.9px;font-size:8.6px;line-height:12px;color:#222;letter-spacing:-0.268px;">Terraza</div>
<div class="t" style="left:880.8px;top:234.7px;font-size:8.6px;line-height:12px;color:#222;letter-spacing:-0.391px;">Planos estructurales (Plano estructural FUNDACIONES)</div>
<div class="t" style="left:894.7px;top:246.4px;font-size:8.6px;line-height:12px;color:#222;letter-spacing:-0.890px;">FUNDACIONES</div>
<div class="t" style="left:880.8px;top:258.1px;font-size:8.6px;line-height:12px;color:#222;letter-spacing:-0.305px;">Planos de planta</div>
<div class="t" style="left:894.7px;top:269.9px;font-size:8.6px;line-height:12px;color:#222;letter-spacing:-0.650px;">Piso 1</div>
<div class="t" style="left:894.7px;top:281.6px;font-size:8.6px;line-height:12px;color:#222;letter-spacing:-0.600px;">Piso 2</div>
<div class="t" style="left:894.7px;top:293.3px;font-size:8.6px;line-height:12px;color:#222;letter-spacing:-0.600px;">Piso 3</div>
<div class="t" style="left:880.8px;top:305.1px;font-size:8.6px;line-height:12px;color:#222;letter-spacing:-0.494px;">Vistas 3D</div>
<div class="t" style="left:894.7px;top:316.8px;font-size:8.6px;line-height:12px;color:#222;letter-spacing:-0.114px;">Modelo analítico</div>
<div class="t" style="left:894.7px;top:328.5px;font-size:8.6px;line-height:12px;color:#222;letter-spacing:-0.522px;font-weight:bold;">{3D}</div>
<div class="t" style="left:880.8px;top:340.2px;font-size:8.6px;line-height:12px;color:#222;letter-spacing:-0.230px;">Alzados (Alzado de edificio)</div>
<div class="t" style="left:894.7px;top:352.0px;font-size:8.6px;line-height:12px;color:#222;letter-spacing:-0.577px;">Este</div>
<div class="t" style="left:894.7px;top:363.7px;font-size:8.6px;line-height:12px;color:#222;letter-spacing:-0.206px;">Norte</div>
<div class="t" style="left:894.7px;top:375.4px;font-size:8.6px;line-height:12px;color:#222;letter-spacing:-0.489px;">Oeste</div>
<div class="t" style="left:894.7px;top:387.2px;font-size:8.6px;line-height:12px;color:#222;letter-spacing:-0.561px;">Sur</div>
<div class="t" style="left:880.8px;top:398.9px;font-size:8.6px;line-height:12px;color:#222;letter-spacing:-0.270px;">Alzados (Alzado de estructura)</div>
<div class="t" style="left:894.7px;top:410.6px;font-size:8.6px;line-height:12px;color:#222;letter-spacing:-0.585px;">EJE - 2d</div>
<div class="t" style="left:877.3px;top:422.4px;font-size:8.6px;line-height:12px;color:#222;letter-spacing:-0.450px;">Leyendas</div>
<div class="t" style="left:877.3px;top:434.1px;font-size:8.6px;line-height:12px;color:#222;letter-spacing:-0.197px;">Tablas de planificación/Cantidades (todo)</div>
<div class="t" style="left:877.3px;top:445.8px;font-size:8.6px;line-height:12px;color:#222;letter-spacing:-0.281px;">Planos (todo)</div>
<div style="left:876px;top:457.93999999999994px;width:32px;height:11.2px;background:#e6e6e6;"></div>
<div class="t" style="left:877.3px;top:457.5px;font-size:8.6px;line-height:12px;color:#222;letter-spacing:-0.365px;">Familias</div>
<div class="t" style="left:877.3px;top:469.3px;font-size:8.6px;line-height:12px;color:#222;letter-spacing:-0.334px;">Grupos</div>
<div class="t" style="left:877.3px;top:481.0px;font-size:8.6px;line-height:12px;color:#222;letter-spacing:-0.307px;">Vínculos de Revit</div>
<div style="left:849px;top:547.2px;width:175px;height:10.8px;background:#f0f0f0;"></div>
<div style="left:860.5px;top:547.6px;width:116px;height:9.8px;background:#c9c9c9;"></div>
<div class="t" style="left:2.1px;top:561.7px;font-size:8.6px;line-height:12px;color:#222;letter-spacing:-0.276px;">Mantenga pulsado el botón y mueva el ratón para girar la vista.</div>
<div style="left:378.6px;top:561.8px;width:136px;height:12.6px;background:#fff;border:1px solid #c4c4c4;"></div>
<div class="t" style="left:532.8px;top:562.0px;font-size:8.6px;line-height:12px;color:#333;letter-spacing:0.214px;">:0</div>
<div style="left:579.6px;top:561.8px;width:140.4px;height:12.6px;background:#fff;border:1px solid #c4c4c4;"></div>
<div class="t" style="left:584.2px;top:562.0px;font-size:8.6px;line-height:12px;color:#8a8a8a;letter-spacing:-0.313px;">Modelo base</div>
<div class="t" style="left:976.8px;top:562.2px;font-size:8px;line-height:12px;color:#333;letter-spacing:-0.836px;">:0</div>
<svg width="1024" height="576" viewBox="0 0 1024 576" style="pointer-events:none">
<path d="M787 8.8 l2.8 -2.2 v4.4 z" fill="#444" />
<rect x="796.0" y="4.6" width="4.2" height="8.6" fill="#777" stroke="#333" stroke-width="1" rx="1.5" />
<rect x="802.4" y="4.6" width="4.2" height="8.6" fill="#777" stroke="#333" stroke-width="1" rx="1.5" />
<line x1="800.0" y1="7.5" x2="802.5" y2="7.5" stroke="#333" stroke-width="1.6" />
<circle cx="817.0" cy="6.3" r="2.8" fill="none" stroke="#2a62c9" stroke-width="1.3"/>
<path d="M812 14 q0 -5 5 -5 q5 0 5 5 z" fill="#2a62c9" />
<path d="M882.9 8.2 h3.4 l-1.7 1.7 z" fill="#444" />
<path d="M892.5 4.5 h2 l1.5 6 h6 l1.2 -4.5 h-8" fill="none" stroke="#4a6a9a" stroke-width="1.1" />
<circle cx="897.0" cy="12.6" r="0.9" fill="#4a6a9a"/>
<circle cx="901.5" cy="12.6" r="0.9" fill="#4a6a9a"/>
<rect x="20.0" y="4.2" width="9.0" height="9.0" fill="none" stroke="#5a5f66" stroke-width="1.1" />
<line x1="20.0" y1="7.0" x2="29.0" y2="7.0" stroke="#5a5f66" stroke-width="1.1" />
<line x1="23.5" y1="7.0" x2="23.5" y2="13.0" stroke="#5a5f66" stroke-width="1" />
<path d="M38 13 v-8 h3.5 l1 1.5 h4.5 v2 M38 13 l2.3 -4.8 h8 l-2.3 4.8 z" fill="none" stroke="#5a5f66" stroke-width="1.1" />
<rect x="54.5" y="4.0" width="9.8" height="9.8" fill="#50555c" stroke="#5a5f66" stroke-width="0.8" />
<rect x="56.5" y="4.0" width="5.8" height="3.6" fill="#e8e8e8" />
<rect x="56.5" y="9.6" width="5.8" height="4.2" fill="#e8e8e8" />
<path d="M71 6.5 l4.5 -2.2 l4.5 2.2 v5.2 l-4.5 2.2 l-4.5 -2.2 z M71 6.5 l4.5 2.2 l4.5 -2.2 M75.5 8.7 v5.2" fill="#c9c9c9" stroke="#a8a8a8" stroke-width="0.9" />
<circle cx="87.5" cy="8.8" r="1.1" fill="#555"/>
<path d="M95 8.5 l3.8 -3.6 v2.2 q5.2 0 5.2 4.2 q0 1.6 -1.2 2.6 q0.3 -3.6 -4 -3.4 v2 z" fill="none" stroke="#5a5f66" stroke-width="1.1" />
<circle cx="111.0" cy="8.8" r="1.1" fill="#555"/>
<path d="M127 8.5 l-3.8 -3.6 v2.2 q-5.2 0 -5.2 4.2 q0 1.6 1.2 2.6 q-0.3 -3.6 4 -3.4 v2 z" fill="none" stroke="#b4b4b4" stroke-width="1.1" />
<circle cx="134.8" cy="8.8" r="1.1" fill="#555"/>
<rect x="144.0" y="3.6" width="6.5" height="3.5" fill="#f4f4f4" stroke="#5a5f66" stroke-width="1" />
<rect x="142.0" y="6.8" width="10.6" height="5.2" fill="#f4f4f4" stroke="#5a5f66" stroke-width="1.1" rx="1.2" />
<rect x="144.2" y="10.3" width="6.2" height="3.6" fill="#f4f4f4" stroke="#5a5f66" stroke-width="1" />
<line x1="163.0" y1="7.0" x2="172.5" y2="7.0" stroke="#aaa" stroke-width="1.3" />
<line x1="163.0" y1="10.6" x2="172.5" y2="10.6" stroke="#aaa" stroke-width="1.3" />
<circle cx="180.0" cy="8.8" r="1.1" fill="#555"/>
<line x1="188.0" y1="13.0" x2="196.5" y2="4.5" stroke="#5a5f66" stroke-width="1.3" />
<path d="M186.8 11.5 l3 3 M194.8 3.2 l3 3" fill="none" stroke="#5a5f66" stroke-width="1.3" />
<path d="M204 13.5 v-5 q0 -3 3 -3" fill="none" stroke="#5a5f66" stroke-width="1.1" />
<circle cx="209.6" cy="7.6" r="3.1" fill="#f0f0f0" stroke="#5a5f66" stroke-width="1"/>
<path d="M240.3 8.3 l4.5 -4 l4.5 4 v4 l-4.5 2 l-4.5 -2 z M240.3 8.3 l4.5 2 l4.5 -2 M244.8 10.3 v4" fill="#e2e2e2" stroke="#5a5f66" stroke-width="1" />
<circle cx="257.0" cy="8.8" r="1.1" fill="#555"/>
<path d="M264.5 8.5 l3.6 -3.6 l3.6 3.6 l-3.6 3.6 z" fill="#e6e6e6" stroke="#b0b0b0" stroke-width="1" />
<rect x="277.2" y="1.2" width="15.8" height="14.4" fill="#cfe3f7" stroke="#3c8ad8" stroke-width="1" />
<rect x="279.5" y="3.5" width="4.5" height="2.2" fill="#444" />
<line x1="285.5" y1="4.5" x2="291.0" y2="4.5" stroke="#444" stroke-width="1" />
<rect x="279.5" y="7.3" width="4.5" height="2.2" fill="#444" />
<line x1="285.5" y1="8.3" x2="291.0" y2="8.3" stroke="#444" stroke-width="1" />
<rect x="279.5" y="11.0" width="4.5" height="2.2" fill="#444" />
<line x1="285.5" y1="12.0" x2="291.0" y2="12.0" stroke="#444" stroke-width="1" />
<rect x="301.5" y="3.5" width="4.0" height="4.0" fill="#f4f4f4" stroke="#888" stroke-width="0.9" />
<rect x="306.5" y="3.5" width="4.0" height="4.0" fill="#f4f4f4" stroke="#888" stroke-width="0.9" />
<rect x="301.5" y="8.8" width="4.0" height="4.0" fill="#f4f4f4" stroke="#888" stroke-width="0.9" />
<path d="M306.5 9 l4 4 M310.5 9 l-4 4" fill="none" stroke="#e03030" stroke-width="1.3" />
<rect x="316.5" y="4.0" width="8.0" height="6.5" fill="#f4f4f4" stroke="#5a5f66" stroke-width="1.1" rx="1" />
<rect x="319.5" y="7.5" width="7.5" height="6.0" fill="#f4f4f4" stroke="#5a5f66" stroke-width="1.1" rx="1" />
<circle cx="332.6" cy="8.8" r="1.1" fill="#555"/>
<line x1="339.5" y1="6.0" x2="345.5" y2="6.0" stroke="#444" stroke-width="1.1" />
<path d="M340.5 8.6 h4.0 l-2.0 2.0 z" fill="#444" />
<rect x="789.0" y="24.0" width="10.0" height="5.4" fill="#f4f4f4" stroke="#555" stroke-width="0.9" rx="1.5" />
<rect x="792.5" y="25.8" width="3.0" height="1.8" fill="#555" />
<path d="M802.3 26.1 h3.4 l-1.7 1.7 z" fill="#444" />
<path d="M25.6 40.6 v10.4 l2.5 -2.3 l1.8 3.9 l1.7 -0.8 l-1.8 -3.8 h3.4 z" fill="#fff" stroke="#444" stroke-width="0.9" />
<path d="M49.3 90.0 h4.8 l-2.4 2.4 z" fill="#444" />
<path d="M63 45.5 l9 -7.5 h9 l-9 7.5 z" fill="#f2f2f2" stroke="#5a5f66" stroke-width="1" />
<path d="M63 56 l9 -7.5 h9 l-9 7.5 z" fill="#f2f2f2" stroke="#5a5f66" stroke-width="1" />
<path d="M67.5 45.5 v4.5 M76 41.5 v7" fill="none" stroke="#5a5f66" stroke-width="1" />
<path d="M69 45.5 l6.5 -5.4 v8 l-6.5 5.4 z" fill="#d0d3d8" stroke="#5a5f66" stroke-width="0.9" />
<path d="M88.5 39.5 l7 1.2 q2 .4 2 2 v5 l-7 -1.2 q-2 -.4 -2 -2 z" fill="#f4f4f4" stroke="#5a5f66" stroke-width="1" />
<rect x="90.3" y="54.5" width="4.0" height="9.5" fill="#f4f4f4" stroke="#5a5f66" stroke-width="1" rx="1.8" />
<path d="M87.6 79.6 q2 -1.6 3.6 0 q1.6 1.2 3.2 0 q1.4 -1 2.8 0 M88.4 77.4 q2 -6 8.6 -5.6" fill="none" stroke="#5a5f66" stroke-width="1.5" />
<path d="M125.7 42.4 h3.2 l-1.6 1.6 z" fill="#444" />
<path d="M126.7 75.2 h3.2 l-1.6 1.6 z" fill="#444" />
<rect x="136.3" y="38.6" width="10.4" height="8.8" fill="#5a5f66" stroke="#5a5f66" stroke-width="1" />
<path d="M136.3 38.6 l2.6 8.8 l2.6 -8.8 l2.6 8.8 l2.6 -8.8" fill="none" stroke="#f4f4f4" stroke-width="1.1" />
<rect x="137.6" y="54.0" width="7.8" height="10.3" fill="#5a9be6" stroke="#4a90d9" stroke-width="1" />
<path d="M137.6 54 l7.8 5 l-7.8 5.3 M145.4 54 l-7.8 5 l7.8 5.3" fill="none" stroke="#eaf3fd" stroke-width="1.2" />
<rect x="136.3" y="70.6" width="10.4" height="10.2" fill="#cfe3f7" stroke="#4a90d9" stroke-width="1" />
<line x1="138.4" y1="70.6" x2="138.4" y2="80.8" stroke="#4a90d9" stroke-width="0.8" />
<line x1="140.5" y1="70.6" x2="140.5" y2="80.8" stroke="#4a90d9" stroke-width="0.8" />
<line x1="142.5" y1="70.6" x2="142.5" y2="80.8" stroke="#4a90d9" stroke-width="0.8" />
<line x1="144.6" y1="70.6" x2="144.6" y2="80.8" stroke="#4a90d9" stroke-width="0.8" />
<path d="M207.8 90 l2.4 2.4 M210.4 90.4 v2.2 h-2.2" fill="none" stroke="#444" stroke-width="1" />
<path d="M234.4 41.2 l4.4 -2.6 v14.6 l-4.4 2.6 z" fill="#aeb3ba" stroke="#4c5158" stroke-width="1" />
<path d="M238.8 38.6 l3 1.2 v14.6 l-3 -1.2 z" fill="#7d838b" stroke="#4c5158" stroke-width="0.9" />
<path d="M245.6 42.4 l4.6 -2.2 l2.6 1.6 v3.6 l-2.4 1 v4.6 l2.4 1 v3.6 l-2.6 1.6 l-4.6 -2 z" fill="#9aa0a8" stroke="#4c5158" stroke-width="1" />
<path d="M241.8 44.4 h6.4 v7 h-6.4 z" fill="#3f8fe8" stroke="#2a6fc4" stroke-width="0.9" />
<path d="M255.4 90.0 h4.8 l-2.4 2.4 z" fill="#444" />
<path d="M266.6 90 l2.4 2.4 M269.2 90.4 v2.2 h-2.2" fill="none" stroke="#444" stroke-width="1" />
<path d="M282 51.5 l4.5 -3.5 h9.5 l-4.5 3.5 z M282 51.5 v3.3 h9.5 v-3.3 M291.5 54.8 l4.5 -3.5 v-3.3" fill="#9ccbf5" stroke="#4a90d9" stroke-width="1" />
<rect x="286.5" y="37.5" width="4.6" height="12.0" fill="#eceef0" stroke="#5a5f66" stroke-width="1" rx="2" />
<path d="M307.5 52 l4.5 -3.5 h14 l-4.5 3.5 z M307.5 52 v3 h14 v-3 M321.5 55 l4.5 -3.5 v-3" fill="#9ccbf5" stroke="#4a90d9" stroke-width="1" />
<path d="M311 50 v-9 q0 -3 3 -3 h6 v9.5 h-4.5 v2.5 z" fill="#eceef0" stroke="#5a5f66" stroke-width="1" />
<path d="M320 38 l3 -0.5 v9 l-3 1" fill="#d7dade" stroke="#5a5f66" stroke-width="0.9" />
<path d="M336 49.5 l5.5 -6.5 h12.5 l-5.5 6.5 z" fill="#a9d2f7" stroke="#4a90d9" stroke-width="1" />
<path d="M336 49.5 v2.6 h12.5 v-2.6 M348.5 52.1 l5.5 -6.5 v-2.6" fill="#79b4ec" stroke="#4a90d9" stroke-width="1" />
<path d="M343.6 73.8 h3.4 l-1.7 1.7 z" fill="#444" />
<rect x="374.0" y="38.0" width="18.2" height="18.2" fill="#f8f8f8" stroke="#6a6a6a" stroke-width="1.4" rx="2" />
<circle cx="376.8" cy="40.8" r="1.3" fill="#333"/>
<circle cx="389.4" cy="40.8" r="1.3" fill="#333"/>
<circle cx="376.8" cy="53.4" r="1.3" fill="#333"/>
<circle cx="389.4" cy="53.4" r="1.3" fill="#333"/>
<path d="M383 47 l5 5 M388 49.2 v2.8 h-2.8" fill="none" stroke="#555" stroke-width="1" />
<line x1="407.0" y1="39.6" x2="416.0" y2="39.6" stroke="#555" stroke-width="0.9" />
<line x1="407.6" y1="38.6" x2="407.6" y2="47.4" stroke="#555" stroke-width="0.9" />
<line x1="407.0" y1="41.9" x2="416.0" y2="41.9" stroke="#555" stroke-width="0.9" />
<line x1="410.2" y1="38.6" x2="410.2" y2="47.4" stroke="#555" stroke-width="0.9" />
<line x1="407.0" y1="44.2" x2="416.0" y2="44.2" stroke="#555" stroke-width="0.9" />
<line x1="412.8" y1="38.6" x2="412.8" y2="47.4" stroke="#555" stroke-width="0.9" />
<line x1="407.0" y1="46.5" x2="416.0" y2="46.5" stroke="#555" stroke-width="0.9" />
<line x1="415.4" y1="38.6" x2="415.4" y2="47.4" stroke="#555" stroke-width="0.9" />
<path d="M407 62 h2 v-2 h2 v2 M412 56 h3.5 v3 h-2.5 M415.5 59 v3.5 h-3.5" fill="none" stroke="#4a90d9" stroke-width="1.1" />
<rect x="406.4" y="70.6" width="6.5" height="9.5" fill="#a9cdf0" stroke="#4a90d9" stroke-width="1" />
<path d="M408 72 l6.5 8 h-6.5 z" fill="#f4f4f4" stroke="#555" stroke-width="0.9" />
<circle cx="412.0" cy="76.0" r="1.8" fill="none" stroke="#555" stroke-width="0.8"/>
<path d="M487 47 v-8 h5 l3.5 3.5 v4.5 z" fill="#f2f2f2" stroke="#c4c4c4" stroke-width="1" />
<rect x="486.5" y="54.3" width="9.8" height="9.8" fill="#dcebfa" stroke="#5b6f8a" stroke-width="1.3" />
<rect x="489.0" y="56.8" width="4.8" height="4.8" fill="#f8f8f8" stroke="#9ab8da" stroke-width="0.8" />
<rect x="486.5" y="73.7" width="4.6" height="4.2" fill="#444" />
<rect x="491.6" y="73.7" width="4.8" height="4.2" fill="#f4f4f4" stroke="#444" stroke-width="0.9" />
<path d="M492.4 90.0 h4.8 l-2.4 2.4 z" fill="#444" />
<path d="M614.5 42.5 q0 -1 1 -1.6 l3.4 -2.6 q.8 -.6 2 -.6 h11 q1.4 0 1.4 1.4 v11.6 q0 1 -.8 1.8 l-3 3.2 q-.8 .8 -2 .8 h-11.6 q-1.4 0 -1.4 -1.4 z" fill="#e3e5e9" stroke="#5a5f66" stroke-width="1.1" />
<path d="M614.8 48 h7 q1 0 1 -1 v-4 q0 -1.2 1.2 -1.2 h5 M629 41.8 l3.6 -3.6 M629 42 v13.5" fill="none" stroke="#5a5f66" stroke-width="1" />
<path d="M622.6 73.5 h3.4 l-1.7 1.7 z" fill="#444" />
<path d="M665 47 l4.2 -8.5 l4.2 8.5 M666.5 44 h5.4" fill="none" stroke="#5a5f66" stroke-width="1.1" />
<circle cx="669.2" cy="44.5" r="2.0" fill="none" stroke="#5a5f66" stroke-width="0.8"/>
<path d="M666 55 v9 M664.5 56.5 l1.5 -1.5 l1.5 1.5 M664.5 62.5 l1.5 1.5 l1.5 -1.5 M670 55 q0 6.5 5.5 8" fill="none" stroke="#5a5f66" stroke-width="1.1" />
<path d="M667 71 h-2 v10 h2 M673.5 71 h2 v10 h-2" fill="none" stroke="#5a5f66" stroke-width="1.1" />
<rect x="667.3" y="73.5" width="4.0" height="4.0" fill="none" stroke="#5a5f66" stroke-width="0.9" />
<circle cx="671.5" cy="77.5" r="2.0" fill="none" stroke="#5a5f66" stroke-width="0.9"/>
<path d="M746.1 75.2 h3.2 l-1.6 1.6 z" fill="#444" />
<path d="M760 37 h18 v3.2 q-3 0 -3 2.3 v7 q0 2.3 3 2.3 v3.2 h-18 v-3.2 q3 0 3 -2.3 v-7 q0 -2.3 -3 -2.3 z" fill="#9aa0a8" stroke="#70757c" stroke-width="0.8" />
<rect x="759.5" y="43.8" width="19.0" height="4.6" fill="#eeeeee" />
<line x1="761.0" y1="46.1" x2="777.0" y2="46.1" stroke="#4a90d9" stroke-width="1" />
<path d="M761 46.1 l2.4 -1.8 v3.6 z M777 46.1 l-2.4 -1.8 v3.6 z" fill="#4a90d9" />
<line x1="766.0" y1="44.2" x2="766.0" y2="48.0" stroke="#4a90d9" stroke-width="0.8" />
<line x1="772.0" y1="44.2" x2="772.0" y2="48.0" stroke="#4a90d9" stroke-width="0.8" />
<rect x="788.0" y="40.0" width="6.0" height="5.0" fill="#a4a8ae" stroke="#80858c" stroke-width="0.7" />
<rect x="800.5" y="40.0" width="6.0" height="5.0" fill="#a4a8ae" stroke="#80858c" stroke-width="0.7" />
<rect x="788.0" y="48.4" width="6.0" height="5.0" fill="#a4a8ae" stroke="#80858c" stroke-width="0.7" />
<rect x="800.5" y="48.4" width="6.0" height="5.0" fill="#a4a8ae" stroke="#80858c" stroke-width="0.7" />
<line x1="797.3" y1="37.5" x2="797.3" y2="56.0" stroke="#4a90d9" stroke-width="1.1" />
<path d="M797.3 36.6 l-1.9 2.6 h3.8 z M797.3 56.8 l-1.9 -2.6 h3.8 z" fill="#4a90d9" />
<line x1="795.5" y1="42.5" x2="799.1" y2="42.5" stroke="#4a90d9" stroke-width="0.8" />
<line x1="795.5" y1="46.6" x2="799.1" y2="46.6" stroke="#4a90d9" stroke-width="0.8" />
<line x1="795.5" y1="51.0" x2="799.1" y2="51.0" stroke="#4a90d9" stroke-width="0.8" />
<rect x="817.5" y="37.6" width="9.0" height="3.0" fill="#a4a8ae" />
<rect x="817.5" y="44.6" width="9.0" height="3.0" fill="#a4a8ae" />
<line x1="818.0" y1="42.6" x2="826.0" y2="42.6" stroke="#4a90d9" stroke-width="1" />
<line x1="822.0" y1="39.0" x2="822.0" y2="47.5" stroke="#4a90d9" stroke-width="0.9" />
<path d="M817 55.5 l3 1 v6 l-3 -1 z M823.5 57.5 l3.5 1.2 v6 l-3.5 -1.2 z" fill="#7d8ea3" stroke="#56677c" stroke-width="0.7" />
<line x1="821.8" y1="55.0" x2="821.8" y2="65.0" stroke="#4a90d9" stroke-width="0.9" />
<path d="M818.5 81 v-6 h6.5 v-3.5" fill="none" stroke="#d9534f" stroke-width="1.3" />
<circle cx="818.5" cy="81.0" r="1.0" fill="#d9534f"/>
<circle cx="825.0" cy="71.5" r="1.0" fill="#d9534f"/>
<path d="M876.5 50 h5 M884 50 l-3 -2 v4 z" fill="none" stroke="#c8c8c8" stroke-width="1" />
<circle cx="879.0" cy="48.0" r="1.3" fill="#d0d0d0"/>
<line x1="877.0" y1="63.5" x2="886.0" y2="63.5" stroke="#d0d0d0" stroke-width="0.8" />
<line x1="878.0" y1="62.5" x2="878.0" y2="71.5" stroke="#d0d0d0" stroke-width="0.8" />
<line x1="877.0" y1="66.3" x2="886.0" y2="66.3" stroke="#d0d0d0" stroke-width="0.8" />
<line x1="881.0" y1="62.5" x2="881.0" y2="71.5" stroke="#d0d0d0" stroke-width="0.8" />
<line x1="877.0" y1="69.1" x2="886.0" y2="69.1" stroke="#d0d0d0" stroke-width="0.8" />
<line x1="884.0" y1="62.5" x2="884.0" y2="71.5" stroke="#d0d0d0" stroke-width="0.8" />
<path d="M933.5 44.5 l13 -6 l4 1.5 v11 l-13 6 l-4 -1.5 z" fill="#4b97da" stroke="#2a6db4" stroke-width="1" />
<path d="M937.5 46 l13 -6 M937.5 46 v11 M933.5 48.2 l4 1.5 l13 -6 M933.5 52 l4 1.5 l13 -6 M941.8 44 v11 M946.2 42 v11" fill="none" stroke="#d4e8fa" stroke-width="0.8" />
<rect x="959.2" y="39.0" width="7.0" height="7.6" fill="#f4f4f4" stroke="#666" stroke-width="0.9" />
<line x1="959.2" y1="42.8" x2="966.2" y2="42.8" stroke="#666" stroke-width="0.7" />
<line x1="962.7" y1="39.0" x2="962.7" y2="46.6" stroke="#666" stroke-width="0.7" />
<circle cx="967.4" cy="44.3" r="2.1" fill="#f5c542"/>
<path d="M959.5 62.5 l3 -6 h7 l-3 6 z" fill="#ececec" stroke="#c8c8c8" stroke-width="0.9" />
<rect x="959.2" y="71.2" width="9.6" height="9.2" fill="#f4f4f4" stroke="#555" stroke-width="1" />
<rect x="961.0" y="75.0" width="4.2" height="4.2" fill="#6db56d" stroke="#3d8a3d" stroke-width="0.7" />
<line x1="964.0" y1="72.8" x2="967.6" y2="72.8" stroke="#555" stroke-width="0.8" />
<path d="M169 119.8 l6 6.4 M175 119.8 l-6 6.4" fill="none" stroke="#333" stroke-width="1.5" />
<path d="M17 152 v8 l7 3.6 l9 -4 v-8.6 z" fill="#eef0f3" stroke="#6b7078" stroke-width="1" />
<path d="M15.6 152.6 l6.4 -8.6 l9.6 -1.2 l3.6 7.4 l-9.4 4.4 z" fill="#d3d7dd" stroke="#6b7078" stroke-width="1" />
<path d="M22 144 l3.6 10.6 M24 155 v8.4" fill="none" stroke="#6b7078" stroke-width="0.9" />
<rect x="19.4" y="155.4" width="2.8" height="6.0" fill="#3c3f45" />
<path d="M170.6 152.2 h5.0 l-2.5 2.5 z" fill="#333" />
<path d="M113.3 183 l2 2 l2 -2" fill="none" stroke="#666" stroke-width="0.9" />
<rect x="124.8" y="178.6" width="3.4" height="3.8" fill="none" stroke="#555" stroke-width="0.9" />
<rect x="128.8" y="178.6" width="3.4" height="3.8" fill="none" stroke="#555" stroke-width="0.9" />
<rect x="124.8" y="183.1" width="3.4" height="4.6" fill="#8ab4e6" stroke="#555" stroke-width="0.9" />
<rect x="128.8" y="183.1" width="3.4" height="4.6" fill="none" stroke="#555" stroke-width="0.9" />
<path d="M158.8 196.4 l1.8 -2 l1.8 2 z" fill="#444" />
<line x1="158.8" y1="197.6" x2="162.4" y2="197.6" stroke="#444" stroke-width="0.9" />
<path d="M158.8 350.3 l1.8 -2 l1.8 2 z" fill="#444" />
<line x1="158.8" y1="351.5" x2="162.4" y2="351.5" stroke="#444" stroke-width="0.9" />
<path d="M158.8 452.6 l1.8 -2 l1.8 2 z" fill="#444" />
<line x1="158.8" y1="453.8" x2="162.4" y2="453.8" stroke="#444" stroke-width="0.9" />
<path d="M169.2 198.8 l2.5 -2.5 l2.5 2.5" fill="none" stroke="#444" stroke-width="1.1" />
<path d="M169.2 533.6 l2.5 2.5 l2.5 -2.5" fill="none" stroke="#444" stroke-width="1.1" />
<path d="M184 121.5 l4 -2.3 l4.3 2 v4 l-4.3 2.3 l-4 -2.2 z" fill="#c3c9d2" stroke="#5f646b" stroke-width="0.9" />
<path d="M184 121.5 l4.2 2 l4.1 -2.3 M188.2 123.5 v4" fill="none" stroke="#5f646b" stroke-width="0.8" />
<path d="M254.5 119.8 l6 6.4 M260.5 119.8 l-6 6.4" fill="none" stroke="#333" stroke-width="1.4" />
<rect x="270.0" y="118.5" width="8.2" height="9.6" fill="#dedede" stroke="#b4b4b4" stroke-width="0.9" />
<line x1="270.0" y1="121.5" x2="278.2" y2="121.5" stroke="#b4b4b4" stroke-width="0.8" />
<line x1="273.0" y1="118.5" x2="273.0" y2="128.0" stroke="#b4b4b4" stroke-width="0.8" />
<line x1="837.5" y1="119.3" x2="843.5" y2="119.3" stroke="#444" stroke-width="1.1" />
<path d="M837.5 121.3 h6 l-3 3.4 z" fill="#444" />
<path d="M838 138 l3 -3 l3 3" fill="none" stroke="#444" stroke-width="1.2" />
<path d="M838 538.8 l3 3 l3 -3" fill="none" stroke="#444" stroke-width="1.2" />
<path d="M827.6 549.4 l2.8 2.8 l-2.8 2.8" fill="none" stroke="#444" stroke-width="1.2" />
<rect x="845.0" y="551.1" width="1.1" height="1.1" fill="#bdbdbd" />
<rect x="845.0" y="553.3" width="1.1" height="1.1" fill="#bdbdbd" />
<rect x="842.8" y="553.3" width="1.1" height="1.1" fill="#bdbdbd" />
<rect x="845.0" y="555.5" width="1.1" height="1.1" fill="#bdbdbd" />
<rect x="842.8" y="555.5" width="1.1" height="1.1" fill="#bdbdbd" />
<rect x="840.6" y="555.5" width="1.1" height="1.1" fill="#bdbdbd" />
<g opacity="0.95">
<ellipse cx="786.2" cy="187.5" rx="34.3" ry="30.3" fill="#f3f3f3" stroke="#d6d6d6" stroke-width="0.9"/>
<ellipse cx="786.6" cy="186.8" rx="26" ry="23.4" fill="#ffffff" stroke="#d2d2d2" stroke-width="0.9"/>
<defs><filter id="bl" x="-30%" y="-30%" width="160%" height="160%"><feGaussianBlur stdDeviation="1.6"/></filter></defs>
<path d="M775 164 L802 162 L803.5 187 L802 196.5 L777 198 z" fill="#8a8a8a" opacity="0.55" filter="url(#bl)"/>
<path d="M772.6 160.8 L799.9 159.5 L801.2 184.3 L773.9 186.9 z" fill="#f0f0f0" stroke="#c6c6c6" stroke-width="0.8" />
<path d="M773.9 186.9 L801.2 184.3 L800.4 193.4 L775.2 194.7 z" fill="#f4f4f4" stroke="#bcbcbc" stroke-width="0.8" />
<text transform="translate(789.5,183) rotate(-92)" font-family="Liberation Sans, sans-serif" font-size="4.3" fill="#8a8f98" letter-spacing="-0.1">SUPERIOR</text>
<text transform="translate(799.5,188.2) rotate(176)" font-family="Liberation Sans, sans-serif" font-size="3.6" fill="#a0a4ab" letter-spacing="-0.1">POSTERIOR</text>
<rect x="783.4" y="155.8" width="5.2" height="3.6" fill="#f8f8f8" stroke="#9a9a9a" stroke-width="0.7" rx="0.8" />
<rect x="753.4" y="184.5" width="5.2" height="3.6" fill="#f8f8f8" stroke="#9a9a9a" stroke-width="0.7" rx="0.8" />
<rect x="814.6" y="181.5" width="5.2" height="3.6" fill="#f8f8f8" stroke="#9a9a9a" stroke-width="0.7" rx="0.8" />
<rect x="785.4" y="213.7" width="5.2" height="3.6" fill="#f8f8f8" stroke="#9a9a9a" stroke-width="0.7" rx="0.8" />
</g>
<rect x="815.6" y="222.2" width="18.2" height="62.2" fill="#f5f5f5" stroke="#b9b9b9" stroke-width="0.9" rx="2.2" />
<circle cx="824.7" cy="239.0" r="5.2" fill="#fbfbfb" stroke="#9a9a9a" stroke-width="0.9"/>
<circle cx="824.7" cy="239.0" r="2.8" fill="#f0f0f0" stroke="#a8a8a8" stroke-width="0.8"/>
<path d="M823.7 249.5 h2.0 l-1.0 1.0 z" fill="#777" />
<line x1="818.0" y1="253.4" x2="831.5" y2="253.4" stroke="#d0d0d0" stroke-width="0.8" />
<rect x="820.8" y="258.6" width="6.0" height="6.0" fill="#9cc48a" stroke="#7aa66a" stroke-width="0.6" />
<line x1="826.0" y1="264.0" x2="829.0" y2="267.4" stroke="#8a8a8a" stroke-width="1" />
<path d="M823.7 271.9 h2.0 l-1.0 1.0 z" fill="#777" />
<rect x="829.2" y="224.4" width="2.6" height="2.6" fill="#dadada" stroke="#aaa" stroke-width="0.5" />
<circle cx="830.6" cy="280.6" r="1.3" fill="#e4e4e4" stroke="#aaa" stroke-width="0.5"/>
<circle cx="456.3" cy="372.0" r="3.6" fill="none" stroke="#666" stroke-width="0.9"/>
<path d="M452 368.5 l2.5 -.4 l-.6 2.4 M460.6 375.5 l-2.5 .4 l.6 -2.4" fill="none" stroke="#666" stroke-width="0.8" />
<rect x="455.0" y="370.8" width="2.6" height="2.6" fill="#fff" stroke="#666" stroke-width="0.7" />
<rect x="230.3" y="547.3" width="10.4" height="8.2" fill="#4a4f57" stroke="#3a3f46" stroke-width="0.6" />
<rect x="232.8" y="549.2" width="5.4" height="4.4" fill="#f4f4f4" />
<line x1="230.3" y1="547.3" x2="240.7" y2="555.5" stroke="#9a9fa6" stroke-width="0.6" />
<path d="M243.5 549.6 l2.6 -2.6 h7.8 v6.4 l-2.6 2.6 h-7.8 z" fill="#6aaef0" stroke="#2f7fd6" stroke-width="1.1" />
<path d="M243.5 549.6 h7.8 v6.4 M251.3 549.6 l2.6 -2.6" fill="none" stroke="#2f6fc6" stroke-width="0.9" />
<circle cx="260.0" cy="550.4" r="3.0" fill="#f6b73c" stroke="#d98e1a" stroke-width="0.8"/>
<path d="M262.2 552.4 l3.6 3.6 M265.8 552.4 l-3.6 3.6" fill="none" stroke="#e03030" stroke-width="1.3" />
<circle cx="273.6" cy="550.0" r="3.0" fill="#dfe6ef" stroke="#5b8ac4" stroke-width="1"/>
<path d="M275.6 552.4 l3.6 3.6 M279.2 552.4 l-3.6 3.6" fill="none" stroke="#e03030" stroke-width="1.3" />
<path d="M284 549 h6 v4.6 h-6 z" fill="#dfe3e8" stroke="#7d8ea3" stroke-width="0.9" />
<circle cx="290.6" cy="553.4" r="2.2" fill="#cfe4fb" stroke="#4a86c8" stroke-width="0.8"/>
<path d="M296.5 549.6 h6 v4.6 h-6 z" fill="#5e8fd0" stroke="#3b6cb0" stroke-width="0.8" />
<path d="M301 551 l4.6 4.6 M305.6 551 l-4.6 4.6" fill="none" stroke="#e03030" stroke-width="1.4" />
<path d="M310 550.2 h5 v4.4 h-5 z" fill="#5e8fd0" stroke="#3b6cb0" stroke-width="0.8" />
<circle cx="316.8" cy="550.2" r="2.4" fill="#dfe3e8" stroke="#7d8ea3" stroke-width="0.8"/>
<circle cx="317.2" cy="554.6" r="1.6" fill="#5e8fd0"/>
<path d="M322.6 551.4 l4.6 -4 l4.8 4 v4.6 h-9.4 z" fill="#e9ebee" stroke="#555b63" stroke-width="1" />
<rect x="326.0" y="552.0" width="2.6" height="4.0" fill="#555b63" />
<circle cx="338.0" cy="552.0" r="2.3" fill="#eef2f7" stroke="#7d8ea3" stroke-width="0.9"/>
<circle cx="343.2" cy="552.0" r="2.3" fill="#eef2f7" stroke="#7d8ea3" stroke-width="0.9"/>
<path d="M336 549.4 l2 -1.6 M345.4 549.6 l-1.6 -1.8" fill="none" stroke="#7d8ea3" stroke-width="0.8" />
<path d="M354.2 547.6 q2.6 0 2.6 2.6 q0 1.6 -2.6 5 q-2.6 -3.4 -2.6 -5 q0 -2.6 2.6 -2.6 z" fill="#4a9be8" stroke="#2f7fd6" stroke-width="0.6" />
<circle cx="354.2" cy="550.2" r="0.9" fill="#fff"/>
<rect x="362.6" y="548.4" width="8.4" height="6.6" fill="#f4f4f4" stroke="#444" stroke-width="1.2" />
<circle cx="371.0" cy="554.4" r="1.8" fill="#f4f4f4" stroke="#444" stroke-width="0.9"/>
<path d="M375.4 551 l4 -3 l4.6 3 v4.4 h-8.6 z" fill="#b8bcc3" stroke="#6b7078" stroke-width="0.8" />
<circle cx="382.6" cy="552.2" r="2.3" fill="#f2a33a" stroke="#c97a16" stroke-width="0.6"/>
<path d="M389 550 l2.4 -2 h6.2 v5.6 l-2.4 2 h-6.2 z" fill="#c3c6cb" stroke="#70757c" stroke-width="0.9" />
<path d="M389 550 h6.2 v5.6 M395.2 550 l2.4 -2" fill="none" stroke="#70757c" stroke-width="0.8" />
<path d="M402.6 547.6 v8 M402.6 549 h10 M412.6 547.6 v8" fill="none" stroke="#555" stroke-width="1.1" />
<rect x="407.0" y="551.6" width="4.4" height="3.4" fill="#8a8f98" />
<path d="M420.4 548.8 l-2.6 2.7 l2.6 2.7" fill="none" stroke="#444" stroke-width="1.2" />
<path d="M1015.5 120 l5.7 6.4 M1021.2 120 l-5.7 6.4" fill="none" stroke="#333" stroke-width="1.4" />
<line x1="854.7" y1="138.1" x2="854.7" y2="487.0" stroke="#dedede" stroke-width="1.1" />
<line x1="869.0" y1="146.8" x2="869.0" y2="404.9" stroke="#dedede" stroke-width="1.1" />
<line x1="882.5" y1="150.8" x2="882.5" y2="228.9" stroke="#dedede" stroke-width="1.1" />
<line x1="882.5" y1="158.6" x2="892.5" y2="158.6" stroke="#dedede" stroke-width="1.1" />
<line x1="882.5" y1="170.3" x2="892.5" y2="170.3" stroke="#dedede" stroke-width="1.1" />
<line x1="882.5" y1="182.0" x2="892.5" y2="182.0" stroke="#dedede" stroke-width="1.1" />
<line x1="882.5" y1="193.8" x2="892.5" y2="193.8" stroke="#dedede" stroke-width="1.1" />
<line x1="882.5" y1="205.5" x2="892.5" y2="205.5" stroke="#dedede" stroke-width="1.1" />
<line x1="882.5" y1="217.2" x2="892.5" y2="217.2" stroke="#dedede" stroke-width="1.1" />
<line x1="882.5" y1="228.9" x2="892.5" y2="228.9" stroke="#dedede" stroke-width="1.1" />
<line x1="872.5" y1="146.8" x2="879.0" y2="146.8" stroke="#dedede" stroke-width="1.1" />
<line x1="882.5" y1="244.7" x2="882.5" y2="252.4" stroke="#dedede" stroke-width="1.1" />
<line x1="882.5" y1="252.4" x2="892.5" y2="252.4" stroke="#dedede" stroke-width="1.1" />
<line x1="872.5" y1="240.7" x2="879.0" y2="240.7" stroke="#dedede" stroke-width="1.1" />
<line x1="882.5" y1="268.1" x2="882.5" y2="299.3" stroke="#dedede" stroke-width="1.1" />
<line x1="882.5" y1="275.9" x2="892.5" y2="275.9" stroke="#dedede" stroke-width="1.1" />
<line x1="882.5" y1="287.6" x2="892.5" y2="287.6" stroke="#dedede" stroke-width="1.1" />
<line x1="882.5" y1="299.3" x2="892.5" y2="299.3" stroke="#dedede" stroke-width="1.1" />
<line x1="872.5" y1="264.1" x2="879.0" y2="264.1" stroke="#dedede" stroke-width="1.1" />
<line x1="882.5" y1="315.1" x2="882.5" y2="334.5" stroke="#dedede" stroke-width="1.1" />
<line x1="882.5" y1="322.8" x2="892.5" y2="322.8" stroke="#dedede" stroke-width="1.1" />
<line x1="882.5" y1="334.5" x2="892.5" y2="334.5" stroke="#dedede" stroke-width="1.1" />
<line x1="872.5" y1="311.1" x2="879.0" y2="311.1" stroke="#dedede" stroke-width="1.1" />
<line x1="882.5" y1="350.2" x2="882.5" y2="393.2" stroke="#dedede" stroke-width="1.1" />
<line x1="882.5" y1="358.0" x2="892.5" y2="358.0" stroke="#dedede" stroke-width="1.1" />
<line x1="882.5" y1="369.7" x2="892.5" y2="369.7" stroke="#dedede" stroke-width="1.1" />
<line x1="882.5" y1="381.4" x2="892.5" y2="381.4" stroke="#dedede" stroke-width="1.1" />
<line x1="882.5" y1="393.2" x2="892.5" y2="393.2" stroke="#dedede" stroke-width="1.1" />
<line x1="872.5" y1="346.2" x2="879.0" y2="346.2" stroke="#dedede" stroke-width="1.1" />
<line x1="882.5" y1="408.9" x2="882.5" y2="416.6" stroke="#dedede" stroke-width="1.1" />
<line x1="882.5" y1="416.6" x2="892.5" y2="416.6" stroke="#dedede" stroke-width="1.1" />
<line x1="872.5" y1="404.9" x2="879.0" y2="404.9" stroke="#dedede" stroke-width="1.1" />
<rect x="851.4" y="131.8" width="6.6" height="6.6" fill="#eeeeee" stroke="#a8a8a8" stroke-width="0.8" />
<line x1="853.0" y1="135.1" x2="856.4" y2="135.1" stroke="#555" stroke-width="0.9" />
<path d="M864.4 133 v-1.8 h1.8 M871.6 131.2 h1.8 v1.8 M873.4 138 v1.8 h-1.8 M866.2 139.8 h-1.8 v-1.8" fill="none" stroke="#444" stroke-width="1" />
<rect x="866.3" y="132.8" width="5.2" height="5.4" fill="none" stroke="#555" stroke-width="0.9" rx="1.4" />
<rect x="865.7" y="143.5" width="6.6" height="6.6" fill="#eeeeee" stroke="#a8a8a8" stroke-width="0.8" />
<line x1="867.3" y1="146.8" x2="870.7" y2="146.8" stroke="#555" stroke-width="0.9" />
<rect x="865.7" y="237.4" width="6.6" height="6.6" fill="#eeeeee" stroke="#a8a8a8" stroke-width="0.8" />
<line x1="867.3" y1="240.7" x2="870.7" y2="240.7" stroke="#555" stroke-width="0.9" />
<rect x="865.7" y="260.8" width="6.6" height="6.6" fill="#eeeeee" stroke="#a8a8a8" stroke-width="0.8" />
<line x1="867.3" y1="264.1" x2="870.7" y2="264.1" stroke="#555" stroke-width="0.9" />
<rect x="865.7" y="307.8" width="6.6" height="6.6" fill="#eeeeee" stroke="#a8a8a8" stroke-width="0.8" />
<line x1="867.3" y1="311.1" x2="870.7" y2="311.1" stroke="#555" stroke-width="0.9" />
<rect x="865.7" y="342.9" width="6.6" height="6.6" fill="#eeeeee" stroke="#a8a8a8" stroke-width="0.8" />
<line x1="867.3" y1="346.2" x2="870.7" y2="346.2" stroke="#555" stroke-width="0.9" />
<rect x="865.7" y="401.6" width="6.6" height="6.6" fill="#eeeeee" stroke="#a8a8a8" stroke-width="0.8" />
<line x1="867.3" y1="404.9" x2="870.7" y2="404.9" stroke="#555" stroke-width="0.9" />
<line x1="856.0" y1="428.4" x2="862.0" y2="428.4" stroke="#dedede" stroke-width="1.1" />
<rect x="864.0" y="423.8" width="9.4" height="9.2" fill="#f4f4f4" stroke="#555" stroke-width="0.9" />
<rect x="864.0" y="423.8" width="9.4" height="2.6" fill="#555" />
<line x1="865.5" y1="428.6" x2="867.5" y2="428.6" stroke="#555" stroke-width="0.9" />
<line x1="868.5" y1="428.6" x2="872.0" y2="428.6" stroke="#555" stroke-width="0.7" />
<line x1="865.5" y1="431.0" x2="867.5" y2="431.0" stroke="#555" stroke-width="0.9" />
<line x1="868.5" y1="431.0" x2="872.0" y2="431.0" stroke="#555" stroke-width="0.7" />
<line x1="856.0" y1="440.1" x2="862.0" y2="440.1" stroke="#dedede" stroke-width="1.1" />
<rect x="864.0" y="435.7" width="9.4" height="8.8" fill="#f4f4f4" stroke="#555" stroke-width="0.9" />
<rect x="864.0" y="435.7" width="9.4" height="2.4" fill="#666" />
<line x1="864.0" y1="440.5" x2="873.4" y2="440.5" stroke="#888" stroke-width="0.6" />
<line x1="864.0" y1="442.5" x2="873.4" y2="442.5" stroke="#888" stroke-width="0.6" />
<line x1="867.2" y1="438.1" x2="867.2" y2="444.5" stroke="#888" stroke-width="0.6" />
<line x1="856.0" y1="451.8" x2="862.0" y2="451.8" stroke="#dedede" stroke-width="1.1" />
<rect x="864.0" y="447.2" width="9.0" height="9.2" fill="#f4f4f4" stroke="#555" stroke-width="0.9" />
<rect x="865.4" y="448.6" width="4.0" height="3.4" fill="#c8d4e2" stroke="#667" stroke-width="0.5" />
<rect x="868.6" y="452.6" width="3.4" height="2.8" fill="#888" />
<rect x="851.4" y="460.2" width="6.6" height="6.6" fill="#eeeeee" stroke="#a8a8a8" stroke-width="0.8" />
<line x1="853.0" y1="463.5" x2="856.4" y2="463.5" stroke="#555" stroke-width="0.9" />
<line x1="854.7" y1="461.8" x2="854.7" y2="465.2" stroke="#555" stroke-width="0.9" />
<line x1="858.5" y1="463.5" x2="862.0" y2="463.5" stroke="#dedede" stroke-width="1.1" />
<rect x="864.0" y="458.9" width="9.4" height="9.2" fill="#f4f4f4" stroke="#555" stroke-width="0.9" />
<path d="M865.4 464.1 h3 v-3.4 h3.4" fill="none" stroke="#555" stroke-width="0.9" />
<rect x="851.4" y="472.0" width="6.6" height="6.6" fill="#eeeeee" stroke="#a8a8a8" stroke-width="0.8" />
<line x1="853.0" y1="475.3" x2="856.4" y2="475.3" stroke="#555" stroke-width="0.9" />
<line x1="854.7" y1="473.6" x2="854.7" y2="477.0" stroke="#555" stroke-width="0.9" />
<line x1="858.5" y1="475.3" x2="862.0" y2="475.3" stroke="#dedede" stroke-width="1.1" />
<path d="M865.6 470.7 h-1.6 v9.2 h1.6 M871.8 470.7 h1.6 v9.2 h-1.6" fill="none" stroke="#555" stroke-width="0.9" />
<rect x="866.4" y="472.9" width="3.2" height="3.2" fill="none" stroke="#555" stroke-width="0.8" />
<circle cx="869.8" cy="476.9" r="1.7" fill="none" stroke="#555" stroke-width="0.8"/>
<rect x="851.4" y="483.7" width="6.6" height="6.6" fill="#eeeeee" stroke="#a8a8a8" stroke-width="0.8" />
<line x1="853.0" y1="487.0" x2="856.4" y2="487.0" stroke="#555" stroke-width="0.9" />
<line x1="854.7" y1="485.3" x2="854.7" y2="488.7" stroke="#555" stroke-width="0.9" />
<line x1="858.5" y1="487.0" x2="862.0" y2="487.0" stroke="#dedede" stroke-width="1.1" />
<rect x="863.4" y="484.7" width="5.6" height="4.6" fill="#f2b53a" stroke="#a97a12" stroke-width="0.7" rx="2" />
<rect x="868.6" y="484.7" width="5.6" height="4.6" fill="#f2b53a" stroke="#a97a12" stroke-width="0.7" rx="2" />
<path d="M855.8 549.8 l-2.6 2.7 l2.6 2.7" fill="none" stroke="#444" stroke-width="1.2" />
<path d="M1016.8 549.8 l2.6 2.7 l-2.6 2.7" fill="none" stroke="#444" stroke-width="1.2" />
<path d="M365 573 v-5.5 l3 -2.5 l3 2.5 v5.5 z" fill="#dfe8f4" stroke="#3f6fb0" stroke-width="0.9" />
<circle cx="371.8" cy="566.0" r="2.0" fill="#7bc47b" stroke="#3d8a3d" stroke-width="0.6"/>
<rect x="370.6" y="568.6" width="3.4" height="4.6" fill="#5e8fd0" />
<path d="M508 567 l2 2 l2 -2" fill="none" stroke="#999" stroke-width="0.9" />
<path d="M520.5 573 l6 -9 M520.5 573 h6" fill="none" stroke="#a8a8a8" stroke-width="1.2" />
<circle cx="526.0" cy="565.5" r="1.6" fill="#c4c4c4"/>
<rect x="551.5" y="563.0" width="9.4" height="9.4" fill="#f4f4f4" stroke="#444" stroke-width="1" />
<rect x="551.5" y="563.0" width="9.4" height="2.6" fill="#444" />
<rect x="553.4" y="567.4" width="2.4" height="1.8" fill="#555" />
<rect x="556.6" y="567.4" width="2.4" height="1.8" fill="#555" />
<rect x="553.4" y="570.0" width="2.4" height="1.4" fill="#555" />
<path d="M568 571.5 v-6 l3 -1.6 h5.4 v6 l-3 1.6 z" fill="#a9a9a9" stroke="#8c8c8c" stroke-width="0.6" />
<path d="M711.7 567 l2 2 l2 -2" fill="none" stroke="#999" stroke-width="0.9" />
<rect x="871.0" y="564.0" width="9.0" height="3.6" fill="#f2c53a" stroke="#b98a12" stroke-width="0.7" rx="1.8" />
<path d="M875.4 566.4 v7 l1.7 -1.6 l1.3 2.6 l1 -.5 l-1.3 -2.5 h2.2 z" fill="#fff" stroke="#333" stroke-width="0.7" />
<path d="M887.5 570.5 l4.6 -5.4 h3.2 v6 l-2 2 h-5.8 z" fill="#dfeaf8" stroke="#3f7fd0" stroke-width="1" />
<path d="M892.6 563 l4 4 M896.6 563 l-4 4" fill="none" stroke="#e03030" stroke-width="1.3" />
<rect x="893.5" y="569.6" width="3.6" height="3.6" fill="#fff" stroke="#555" stroke-width="0.6" />
<rect x="905.0" y="563.2" width="4.6" height="5.4" fill="#f08a3a" stroke="#c0601a" stroke-width="0.6" />
<line x1="907.3" y1="568.6" x2="907.3" y2="573.4" stroke="#c0601a" stroke-width="1.1" />
<line x1="904.2" y1="568.6" x2="910.4" y2="568.6" stroke="#c0601a" stroke-width="1" />
<path d="M909.4 568 v5.6 l1.3 -1.2 l1 2 l.8 -.4 l-1 -2 h1.7 z" fill="#fff" stroke="#333" stroke-width="0.6" />
<path d="M919.6 565.4 l2.4 -1.8 h4 v6.8 l-2.4 1.8 h-4 z" fill="#9fc4f0" stroke="#3f7fd0" stroke-width="1" />
<path d="M924.6 563 l4 4 M928.6 563 l-4 4" fill="none" stroke="#e03030" stroke-width="1.3" />
<rect x="925.4" y="569.6" width="3.6" height="3.6" fill="#fff" stroke="#555" stroke-width="0.6" />
<path d="M938.6 563 v6.4 M935.4 566.2 h6.4" fill="none" stroke="#333" stroke-width="1" />
<path d="M939.6 566.6 v6.8 l1.6 -1.5 l1.2 2.4 l1 -.5 l-1.2 -2.4 h2.1 z" fill="#fff" stroke="#333" stroke-width="0.7" />
<circle cx="955.6" cy="567.8" r="3.4" fill="none" stroke="#b4b4b4" stroke-width="1.8"/>
<circle cx="955.6" cy="567.8" r="1.0" fill="#d0d0d0"/>
<path d="M965.2 563.4 h10.6 l-4 4.6 v4.6 l-2.6 -1.2 v-3.4 z" fill="#dfe6ee" stroke="#5b6f8a" stroke-width="1" />
</svg>
</body></html>
